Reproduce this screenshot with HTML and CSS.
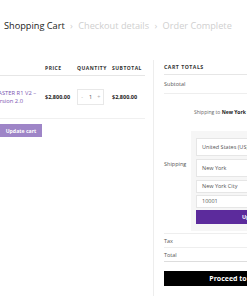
FILE: index.html
```html
<!DOCTYPE html>
<html>
<head>
    <title>Cart</title>
    <link rel="stylesheet" href="styles.css">
</head>
<body>
<main class="page">
    <nav class="steps">
        <span class="step step-current">Shopping Cart</span>
        <span class="step-sep">&rsaquo;</span>
        <span class="step">Checkout details</span>
        <span class="step-sep">&rsaquo;</span>
        <span class="step">Order Complete</span>
    </nav>
    <div class="cart">
        <section class="cart-main">
            <table class="cart-table">
                <thead>
                    <tr>
                        <th class="col-product"></th>
                        <th class="col-price">Price</th>
                        <th class="col-qty">Quantity</th>
                        <th class="col-subtotal">Subtotal</th>
                    </tr>
                </thead>
                <tbody>
                    <tr>
                        <td class="col-product"><a href="#" class="product-link">MASTER R1 V2 &ndash; Version 2.0</a></td>
                        <td class="col-price amount">$2,800.00</td>
                        <td class="col-qty">
                            <div class="qty">
                                <span class="qty-btn">-</span>
                                <span class="qty-val">1</span>
                                <span class="qty-btn">+</span>
                            </div>
                        </td>
                        <td class="col-subtotal amount">$2,800.00</td>
                    </tr>
                </tbody>
            </table>
            <button class="update-btn">Update cart</button>
        </section>
        <aside class="cart-totals">
            <div class="totals-title">Cart totals</div>
            <div class="totals-row subtotal-row">
                <span class="totals-label">Subtotal</span>
            </div>
            <div class="totals-row shipping-row">
                <span class="totals-label">Shipping</span>
                <div class="shipping-value">
                    <p class="shipping-dest">Shipping to <b>New York City, NY 10001</b></p>
                    <div class="calc-form">
                        <div class="calc-field calc-select">United States (US)</div>
                        <div class="calc-field calc-select">New York</div>
                        <div class="calc-field">New York City</div>
                        <div class="calc-field">10001</div>
                        <div class="calc-btn">Update</div>
                    </div>
                </div>
            </div>
            <div class="totals-row">
                <span class="totals-label">Tax</span>
            </div>
            <div class="totals-row totals-last">
                <span class="totals-label">Total</span>
            </div>
            <button class="checkout-btn">Proceed to checkout</button>
        </aside>
    </div>
</main>
</body>
</html>
```

FILE: styles.css
```css
body {
    margin: 0;
    background: #fff;
    font-family: "Open Sans", "Liberation Sans", sans-serif;
    color: #333;
    overflow: hidden;
}

.page {
    width: 247px;
    height: 296px;
    overflow: hidden;
}

.steps {
    height: 60px;
    padding: 20px 0 0 4px;
    box-sizing: border-box;
    font-size: 9.2px;
    line-height: 12px;
    white-space: nowrap;
    color: #cfcfcf;
}

.step-current {
    color: #222;
}

.step-sep {
    margin: 0 3px;
}

.cart {
    display: flex;
    align-items: flex-start;
}

.cart-main {
    width: 153px;
    flex-shrink: 0;
}

.cart-table {
    border-collapse: collapse;
    table-layout: fixed;
    margin-left: -7px;
    width: 152px;
}

.cart-table th {
    height: 15px;
    font-size: 5px;
    font-weight: 700;
    letter-spacing: .5px;
    text-transform: uppercase;
    text-align: left;
    padding: 0;
    border-bottom: 1px solid #e6e6e6;
    color: #333;
}

.cart-table td {
    height: 42px;
    padding: 0;
    border-bottom: 1px solid #f0f0f0;
    vertical-align: middle;
}

.col-product {
    width: 52px;
}

.col-price {
    width: 32px;
}

.col-qty {
    width: 35px;
}

.product-link {
    display: block;
    width: 48px;
    color: #7b56b1;
    text-decoration: none;
    font-size: 5.8px;
    line-height: 8px;
}

.amount {
    font-size: 5.5px;
    font-weight: 700;
    color: #222;
}

.qty {
    display: flex;
    align-items: center;
    width: 27px;
    height: 16px;
    border: 1px solid #e8e8e8;
    box-sizing: border-box;
    font-size: 5.5px;
    color: #aaa;
}

.qty-btn,
.qty-val {
    flex: 1;
    text-align: center;
}

.qty-val {
    color: #555;
}

.update-btn {
    display: block;
    margin-top: 5px;
    width: 42px;
    height: 13px;
    border: 0;
    padding: 0;
    background: #9e85c7;
    color: #fff;
    font-family: inherit;
    font-weight: 700;
    font-size: 5.2px;
}

.cart-totals {
    width: 178px;
    flex-shrink: 0;
    border-left: 1px solid #ededed;
    padding-left: 10px;
    height: 236px;
    font-size: 5.5px;
    color: #555;
}

.totals-title {
    height: 14px;
    line-height: 14px;
    font-size: 5.2px;
    font-weight: 700;
    letter-spacing: .5px;
    text-transform: uppercase;
    color: #333;
    border-bottom: 1px solid #e6e6e6;
}

.totals-row {
    display: flex;
    align-items: center;
    height: 13px;
    border-bottom: 1px solid #eee;
}

.subtotal-row {
    height: 18px;
}

.shipping-row {
    height: 139px;
}

.totals-last {
    border-bottom-color: #ddd;
}

.totals-label {
    width: 27px;
    flex-shrink: 0;
}

.shipping-value {
    width: 150px;
    align-self: flex-start;
}

.shipping-dest {
    margin: 14px 0 15px 3px;
    font-size: 5px;
    line-height: 8px;
    white-space: nowrap;
    color: #666;
}

.shipping-dest b {
    color: #222;
}

.calc-form {
    display: flex;
    flex-direction: column;
    gap: 2px;
    width: 112px;
    padding: 7px 5px;
    background: #f6f6f6;
}

.calc-field {
    height: 13px;
    padding-left: 5px;
    border: 1px solid #e6e6e6;
    box-sizing: border-box;
    background: #fff;
    line-height: 11px;
    font-size: 5.5px;
    color: #555;
}

.calc-select {
    height: 18px;
    line-height: 16px;
}

.calc-select + .calc-field {
    margin-top: 1px;
}

.calc-btn {
    height: 14px;
    line-height: 14px;
    background: #5c2b9c;
    color: #fff;
    font-size: 5.5px;
    font-weight: 700;
    text-align: center;
}

.checkout-btn {
    display: block;
    margin-top: 9px;
    width: 162px;
    height: 15px;
    padding: 0;
    border: 0;
    background: #000;
    color: #fff;
    font-family: inherit;
    font-weight: 700;
    font-size: 7px;
}
```
